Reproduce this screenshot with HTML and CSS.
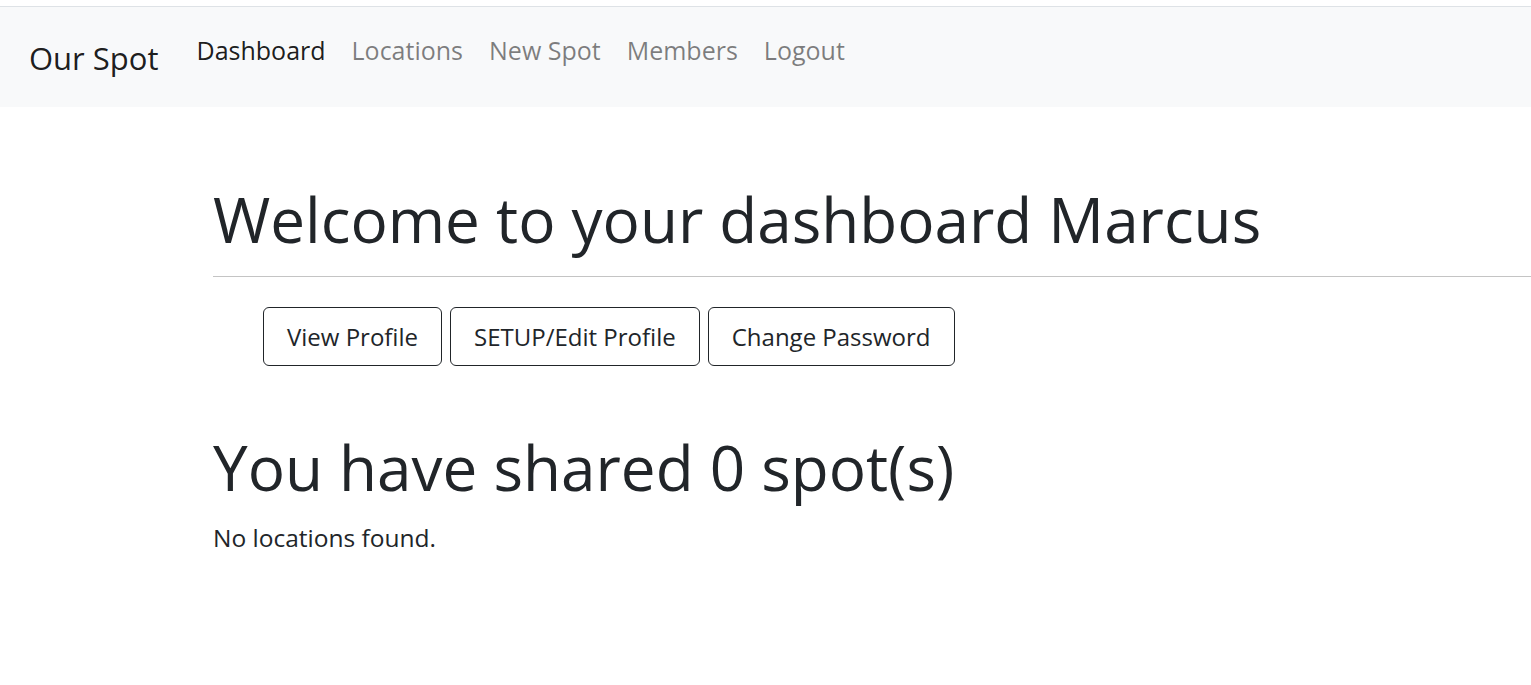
FILE: index.html
```html
<!DOCTYPE html>
<html>
<head>
<meta charset="utf-8">
<link rel="stylesheet" href="styles.css">
</head>
<body>
<nav class="navbar">
  <a class="brand" href="#">Our Spot</a>
  <ul class="nav">
    <li><a class="nav-link active" href="#">Dashboard</a></li>
    <li><a class="nav-link" href="#">Locations</a></li>
    <li><a class="nav-link" href="#">New Spot</a></li>
    <li><a class="nav-link" href="#">Members</a></li>
    <li><a class="nav-link" href="#">Logout</a></li>
  </ul>
</nav>
<main class="main">
  <h1 class="title">Welcome to your dashboard Marcus</h1>
  <hr class="rule">
  <div class="actions">
    <a class="btn" href="#">View Profile</a>
    <a class="btn" href="#">SETUP/Edit Profile</a>
    <a class="btn" href="#">Change Password</a>
  </div>
  <h2 class="subtitle">You have shared 0 spot(s)</h2>
  <p class="empty">No locations found.</p>
</main>
</body>
</html>
```
FILE: styles.css
```css
html, body {
  margin: 0;
  padding: 0;
  background: #fff;
}
body {
  font-family: "Open Sans", "Liberation Sans", sans-serif;
  color: #212529;
}
.navbar {
  margin-top: 6px;
  border-top: 1px solid #dee2e6;
  background: #f8f9fa;
  height: 100px;
  display: flex;
  align-items: flex-start;
  padding-left: 29px;
}
.brand {
  font-size: 31px;
  line-height: 40px;
  margin-top: 31px;
  color: rgba(0,0,0,.9);
  text-decoration: none;
  margin-right: 25px;
}
.nav {
  list-style: none;
  margin: 0;
  padding: 0;
  display: flex;
  margin-top: 25px;
}
.nav-link {
  display: block;
  font-size: 25px;
  line-height: 36px;
  padding: 0 13px;
  color: rgba(0,0,0,.5);
  text-decoration: none;
}
.nav-link.active {
  color: rgba(0,0,0,.9);
}
.main {
  padding-left: 213px;
}
.title {
  margin: 0;
  padding-top: 72px;
  font-size: 62px;
  font-weight: 400;
  line-height: 80px;
}
.rule {
  margin: 17px 0 0;
  border: 0;
  border-top: 1px solid #c4c4c4;
}
.actions {
  display: flex;
  gap: 8px;
  margin-top: 30px;
  padding-left: 50px;
}
.btn {
  display: block;
  font-size: 24px;
  line-height: 37px;
  padding: 10px 23px;
  border: 1px solid #212529;
  border-radius: 6px;
  color: #212529;
  text-decoration: none;
}
.subtitle {
  margin: 61px 0 0;
  font-size: 62px;
  font-weight: 400;
  line-height: 80px;
}
.empty {
  margin: 14px 0 0;
  font-size: 24.5px;
  line-height: 34px;
}
```
